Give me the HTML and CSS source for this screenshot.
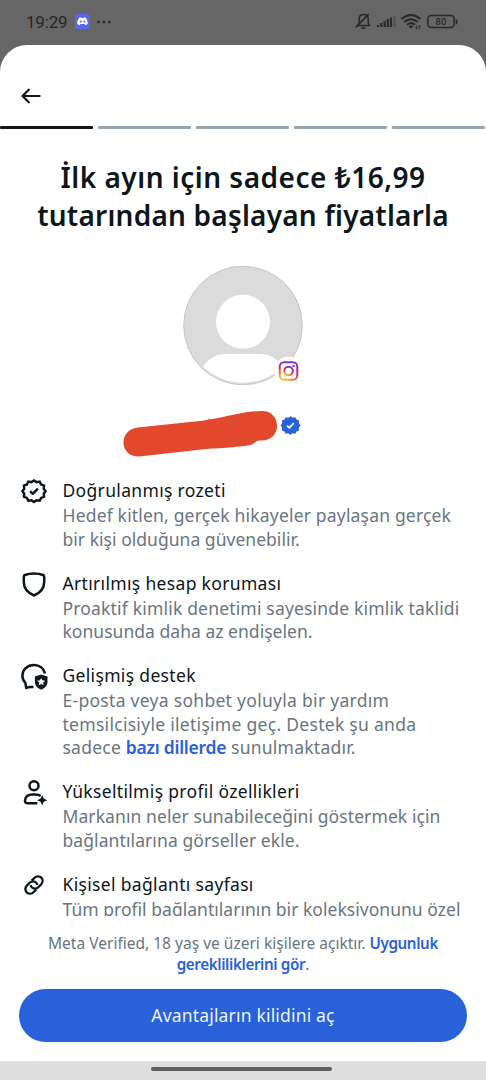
FILE: index.html
```html
<!DOCTYPE html>
<html lang="tr">
<head>
<meta charset="utf-8">
<meta name="viewport" content="width=device-width, initial-scale=1">
<title>Meta Verified</title>
<link rel="stylesheet" href="styles.css">
</head>
<body>
<div class="screen">
  <header class="status">
    <span class="time">19:29</span>
    <svg class="discord" width="15" height="15" viewBox="0 0 15 15"><rect width="15" height="15" rx="3.6" fill="#5a67e6"/><path d="M4.200 3.700 6 3.200l.5.8h2l.5-.8 1.800.5c1.400 2 2 4 1.900 6.200-.8.7-1.600 1.100-2.500 1.300l-.6-1.100H5.400l-.6 1.100c-.9-.2-1.700-.6-2.500-1.300-.1-2.200.5-4.200 1.900-6.200z" fill="#fff"/><ellipse cx="5.700" cy="7.600" rx="1" ry="1.100" fill="#5a67e6"/><ellipse cx="9.300" cy="7.600" rx="1" ry="1.100" fill="#5a67e6"/></svg>
    <svg class="more" width="14" height="4" viewBox="0 0 14 4" fill="#262626"><circle cx="1.500" cy="2" r="1.300"/><circle cx="7" cy="2" r="1.300"/><circle cx="12.300" cy="2" r="1.300"/></svg>
    <svg class="tray" width="106" height="20" viewBox="354 12 106 20" fill="none" stroke="#292929">
      <path d="M357.500 25.600h12.200l-1.400-2.200v-4.200c0-2.800-1.900-4.700-4.600-4.700s-4.600 1.900-4.600 4.700v4.200z" stroke-width="1.500" stroke-linejoin="round"/><path d="M361.200 27.800h4.200q-2.100 2-4.200 0z" fill="#292929" stroke-width=".8"/><path d="M355.800 27.300 368.800 14" stroke-width="1.700"/>
      <path d="M378 25v2M381.300 23v4M384.600 21v6M387.800 19v8M391 17.500v9.500" stroke-width="2.200"/><path d="M394.600 16v11" stroke="#515151" stroke-width="2"/>
      <path d="M401.500 19q9.500-8 19 0M404.200 22q6.800-5.600 13.600 0M407 24.700q4-3.200 8 0" stroke-width="2"/><path d="m408.500 26.200 2.500 2.500 2.500-2.500q-2.500-1.500-5 0z" fill="#292929" stroke="none"/><path d="M416.800 25.500v3.500m-1.300-1.500 1.300 1.500M419.200 28.800v-3.500m1.300 1.500-1.300-1.500" stroke-width="1"/>
      <rect x="427.800" y="15.600" width="26.400" height="11.800" rx="3.500" stroke-width="1.500"/><path d="M456.500 20v3.500" stroke-width="1.700" stroke-linecap="round"/>
      <text x="440.900" y="25.200" class="battery" text-anchor="middle">80</text>
    </svg>
  </header>
  <main class="sheet">
    <nav class="nav"><svg width="20" height="16" viewBox="0 0 20 16" fill="none" stroke="#0d161b" stroke-width="2.200" stroke-linecap="round" stroke-linejoin="round"><path d="M18.600 8H1.500M7.800 1.700 1.500 8l6.300 6.300"/></svg></nav>
    <div class="steps"><i class="on"></i><i></i><i></i><i></i><i></i></div>
    <h1><span class="h1a">İlk ayın için sadece ₺16,99</span><br><span class="h1b">tutarından başlayan fiyatlarla</span></h1>
    <svg class="profile" width="200" height="200" viewBox="110 262 200 200">
      <defs><clipPath id="face"><circle cx="243" cy="325.500" r="57.300"/></clipPath>
      <linearGradient id="ig" x1=".2" y1="1" x2=".65" y2="0"><stop offset="0" stop-color="#ffc43a"/><stop offset=".28" stop-color="#f56b35"/><stop offset=".55" stop-color="#dc2470"/><stop offset="1" stop-color="#6b35e6"/></linearGradient></defs>
      <circle cx="243" cy="325.500" r="59.300" fill="#dbdbdb" stroke="#c7c7c7"/>
      <g clip-path="url(#face)" fill="#fff"><circle cx="243" cy="321.800" r="27"/><path d="M202.500 367q9-13 22-13h37q12 0 22 13v14q-20 4-40 4c-18 0-31-5-41-18z"/></g>
      <circle cx="288.500" cy="371" r="14.300" fill="#fff"/>
      <g fill="none" stroke="url(#ig)" stroke-width="2"><rect x="279.700" y="362.200" width="17.600" height="17.600" rx="4.500"/><circle cx="288.500" cy="371" r="4.300"/></g><circle cx="293.600" cy="365.900" r="1.200" fill="#a02bc0"/>
      <path d="M209 420v-1.500" stroke="#555"/>
      <path d="M138 427.500 190 422C222 419.500 237 411.500 262 411c9 0 15 6 15 15 0 8-6 14.500-15 14.500-7-.5-5 1.500-10 4-5 2-30 3.500-46 4.500l-67 7.500c-20 1-21-27-1-29z" fill="#e2482b"/>
      <path d="m290.500 416.300 2.200 1.500 2.600-.5 1.200 2.300 2.500 1-.1 2.600 1.500 2.300-1.500 2.200.1 2.700-2.500 1-1.200 2.300-2.600-.5-2.200 1.500-2.200-1.500-2.600.5-1.200-2.300-2.500-1 .1-2.700-1.500-2.200 1.500-2.300-.1-2.600 2.500-1 1.200-2.300 2.600.5z" fill="#2861d9"/><path d="m287 425.700 2.300 2.200 4.500-4.700" fill="none" stroke="#fff" stroke-width="1.700"/>
    </svg>
    <section class="list">
      <article><svg class="ico" viewBox="-.5 -.5 29 29"><path d="m14 3 2.700 1.800 3.200-.5 1.400 2.900 3.100 1.200-.3 3.200 1.900 2.600-1.900 2.600.3 3.200-3.100 1.200-1.400 2.900-3.200-.5L14 25.400l-2.700-1.800-3.200.5-1.400-2.900L3.600 20l.3-3.200L2 14.200l1.900-2.600-.3-3.200 3.100-1.200 1.400-2.900 3.200.5z" stroke-linejoin="miter"/><path d="m10 14.200 2.700 2.700 5.300-5.400"/></svg>
        <div><h2>Doğrulanmış rozeti</h2><p><span class="a1">Hedef kitlen, gerçek hikayeler paylaşan gerçek</span><br><span class="a2">bir kişi olduğuna güvenebilir.</span></p></div></article>
      <article><svg class="ico" viewBox="0 0 28 28"><path d="M14 3.500c4 0 6.500.5 9 1.500.8.300 1.200.9 1.200 1.800V12c0 6.500-3.800 10.700-10.200 13.500C7.600 22.700 3.800 18.500 3.800 12V6.800C3.800 5.900 4.200 5.300 5 5c2.500-1 5-1.500 9-1.500z"/></svg>
        <div><h2>Artırılmış hesap koruması</h2><p><span class="b1">Proaktif kimlik denetimi sayesinde kimlik taklidi</span><br><span class="b2">konusunda daha az endişelen.</span></p></div></article>
      <article class="tall"><svg class="ico" viewBox="0 0 28 28"><path d="M25 11.500C23.800 6.300 19.500 3 14 3 7.200 3 2.400 7.800 2.400 13.800c0 2.800 1 5 3 7l.8 5.200c2-1.500 3.500-1.200 7.300-1"/><path d="m21.200 12.500 6.300 2v5c0 4-2.500 6.500-6.300 8.200-3.800-1.700-6.300-4.200-6.300-8.200v-5z" fill="#0d161b" stroke="none"/><path d="m21.200 15.900 1.200 2.400 2.800.4-2 1.900.5 2.700-2.500-1.300-2.500 1.300.5-2.700-2-1.900 2.800-.4z" fill="#fff" stroke="none"/></svg>
        <div><h2>Gelişmiş destek</h2><p><span class="c1">E-posta veya sohbet yoluyla bir yardım</span><br><span class="c2">temsilcisiyle iletişime geç. Destek şu anda</span><br><span class="c3">sadece <b>bazı dillerde</b> sunulmaktadır.</span></p></div></article>
      <article><svg class="ico" viewBox="0 0 28 28"><circle cx="14" cy="7.700" r="4.500"/><path d="M17.300 25.200H7.500c-1.800 0-2.700-1-2.500-2.700.4-3.900 3.200-6 7.300-6h3.200c2.300 0 3.900.4 5.200 1.500"/><path d="M22.200 17.200 23.800 20.600 27.200 22.200 23.800 23.800 22.200 27.200 20.600 23.800 17.200 22.200 20.600 20.600z" fill="#0d161b" stroke="none"/></svg>
        <div><h2>Yükseltilmiş profil özellikleri</h2><p><span class="d1">Markanın neler sunabileceğini göstermek için</span><br><span class="d2">bağlantılarına görseller ekle.</span></p></div></article>
      <article><svg class="ico" viewBox="-1 -1 30 30"><path d="m11.500 9.300 2.800-2.800c2.400-2.400 5.600-2.300 7.500-.4s2 5.100-.4 7.500l-2.500 2.500c-2.400 2.400-5.500 2.200-7.300.3q-.8-.9-1.200-2.200M16.500 18.700l-2.800 2.800c-2.400 2.400-5.600 2.300-7.500.4s-2-5.100.4-7.500l2.500-2.500c2.400-2.400 5.500-2.200 7.300-.3q.8.9 1.200 2.200"/></svg>
        <div><h2>Kişisel bağlantı sayfası</h2><p><span class="e1">Tüm profil bağlantılarının bir koleksiyonunu özel</span></p></div></article>
    </section>
    <footer>
      <p class="legal"><span class="f1">Meta Verified, 18 yaş ve üzeri kişilere açıktır. <b>Uygunluk</b></span><br><span class="f2"><b>gerekliliklerini gör</b>.</span></p>
      <button><span>Avantajların kilidini aç</span></button>
    </footer>
  </main>
  <div class="gesture"><i></i></div>
</div>
</body>
</html>
```
FILE: styles.css
```css
* { box-sizing: border-box; }
body { margin: 0; background: #666; font-family: "Noto Sans", sans-serif; color: #0d161b; }
.screen { display: flex; flex-direction: column; width: 486px; height: 1080px; overflow: hidden; }
.status { display: flex; align-items: center; height: 45px; flex: none; padding: 0 26px 2px; }
.time { font: 17px/20px Roboto, sans-serif; color: #262626; width: 49px; letter-spacing: -.2px; padding-top: 1px; }
.more { margin-left: 7px; }
.tray { margin-left: auto; margin-top: 1px; }
.battery { font: 500 9.500px Roboto, sans-serif; fill: #292929; stroke: none; }
.sheet { display: flex; flex-direction: column; height: 1016px; flex: none; background: #fff; border-radius: 27px 27px 0 0; }
.nav { height: 81px; flex: none; padding: 43px 21px 0; }
.nav svg { display: block; }
.steps { display: flex; gap: 5px; flex: none; padding-right: 1px; }
.steps i { flex: 1; height: 3px; border-radius: 1px; background: #96a5af; }
.steps .on { background: #0d161b; }
h1 { margin: 30px 0 0; text-align: center; font-size: 28px; line-height: 37.500px; font-weight: 600; flex: none; white-space: nowrap; }
.h1a { letter-spacing: .5px; }
.h1b { letter-spacing: .22px; }
.profile { display: block; flex: none; margin: 28px 0 0 110px; }
.list { height: 454px; flex: none; padding: 15px 19.500px 0; overflow: hidden; }
.list article { display: flex; gap: 15px; height: 92.500px; white-space: nowrap; }
.list .tall { height: 116px; }
.ico { width: 28px; height: 28px; flex: none; fill: none; stroke: #0d161b; stroke-width: 2.500; stroke-linejoin: round; }
h2 { margin: 0; font-size: 17.500px; line-height: 25px; font-weight: 400; letter-spacing: .33px; }
.list p { margin: 0; padding-top: 1px; font-size: 17.500px; line-height: 23.500px; color: #687681; }
.list article > div { padding-top: 1px; }
b { font-weight: 600; color: #2861d9; }
.a1, .b1 { letter-spacing: .18px; }
.a2, .b2, .e1 { letter-spacing: .03px; }
.c1, .c2 { letter-spacing: .29px; }
.c3 { letter-spacing: .24px; }
.c3 b { letter-spacing: -.25px; }
.d1, .d2 { letter-spacing: .09px; }
footer { flex: none; padding: 17px 19px 0; }
.legal { margin: 0; text-align: center; font-size: 15.500px; line-height: 21px; color: #687681; white-space: nowrap; }
.f1 { letter-spacing: .01px; }
.legal b { font-size: 15.200px; letter-spacing: -.38px; }
button { display: block; width: 100%; height: 53px; margin-top: 14px; padding: 0 0 2px; border: 0; border-radius: 27px; background: #2861d9; color: #eef3fc; font: 17.500px "Noto Sans", sans-serif; letter-spacing: .18px; }
.gesture { flex: none; height: 19px; background: #dfdfdf; padding: 6px 0 0 151px; }
.gesture i { display: block; width: 181px; height: 4px; border-radius: 2px; background: #606060; }
```
